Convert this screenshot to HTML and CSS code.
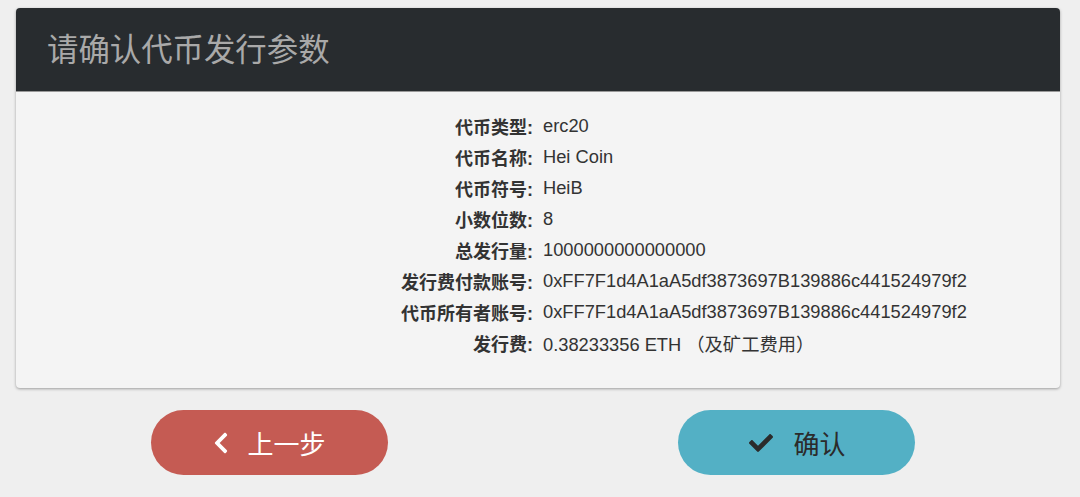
FILE: index.html
```html
<!DOCTYPE html>
<html lang="zh">
<head>
<meta charset="utf-8">
<link rel="stylesheet" href="styles.css">
</head>
<body>
<div class="card">
  <div class="card-header"><h1>请确认代币发行参数</h1></div>
  <div class="card-body">
    <div class="row"><span class="label">代币类型:</span><span class="value">erc20</span></div>
    <div class="row"><span class="label">代币名称:</span><span class="value">Hei Coin</span></div>
    <div class="row"><span class="label">代币符号:</span><span class="value">HeiB</span></div>
    <div class="row"><span class="label">小数位数:</span><span class="value">8</span></div>
    <div class="row"><span class="label">总发行量:</span><span class="value">1000000000000000</span></div>
    <div class="row"><span class="label">发行费付款账号:</span><span class="value">0xFF7F1d4A1aA5df3873697B139886c441524979f2</span></div>
    <div class="row"><span class="label">代币所有者账号:</span><span class="value">0xFF7F1d4A1aA5df3873697B139886c441524979f2</span></div>
    <div class="row"><span class="label">发行费:</span><span class="value">0.38233356 ETH （及矿工费用）</span></div>
  </div>
</div>
<div class="actions">
  <button class="btn btn-back">
    <svg class="icon" viewBox="0 0 320 512" width="16" height="24"><path fill="#fff" d="M34.52 239.03L228.87 44.69c9.37-9.37 24.57-9.37 33.94 0l22.67 22.67c9.36 9.36 9.37 24.52.04 33.9L131.49 256l154.02 154.75c9.34 9.38 9.32 24.54-.04 33.9l-22.67 22.67c-9.37 9.37-24.57 9.37-33.94 0L34.52 272.97c-9.37-9.37-9.37-24.57 0-33.94z"/></svg>
    <span>上一步</span>
  </button>
  <button class="btn btn-ok">
    <svg class="icon" viewBox="0 0 512 512" width="28" height="24"><path fill="#2b2b2b" d="M173.9 439.4L7.5 273c-10-10-10-26.2 0-36.2l36.2-36.2c10-10 26.2-10 36.2 0L192 312.7 432.1 72.6c10-10 26.2-10 36.2 0l36.2 36.2c10 10 10 26.2 0 36.2L210.1 439.4c-10 10-26.2 10-36.2 0z"/></svg>
    <span>确认</span>
  </button>
</div>
</body>
</html>
```
FILE: styles.css
```css
html, body {
  margin: 0;
  padding: 0;
  background: #efefef;
  font-family: "Liberation Sans", "Noto Sans CJK SC", sans-serif;
  color: #333;
}
body {
  padding: 8px 20px 0 16px;
  width: 1080px;
  box-sizing: border-box;
}
.card {
  width: 1044px;
  background: #f4f4f4;
  border-radius: 4px;
  box-shadow: 0 1px 3px rgba(0,0,0,0.35);
  overflow: hidden;
}
.card-header {
  background: #282c2f;
  height: 84px;
  display: flex;
  align-items: center;
  padding-left: 31px;
  border-bottom: 1px solid #999;
  box-sizing: border-box;
}
.card-header h1 {
  margin: 0;
  font-size: 31.4px;
  font-weight: normal;
  color: #a9a9a9;
  font-family: "Noto Sans CJK SC", sans-serif;
  line-height: 1;
  padding-bottom: 4px;
}
.card-body {
  padding: 18px 0 30px;
}
.row {
  display: flex;
  height: 31px;
  align-items: center;
  font-size: 18px;
}
.label {
  width: 50%;
  text-align: right;
  padding-right: 5px;
  box-sizing: border-box;
  font-weight: bold;
  color: #333;
}
.value {
  width: 50%;
  padding-left: 5px;
  box-sizing: border-box;
  color: #333;
  font-size: 18.3px;
}
.actions {
  display: flex;
  padding-top: 22px;
}
.btn {
  width: 237px;
  height: 65px;
  border: none;
  border-radius: 33px;
  display: flex;
  align-items: center;
  justify-content: center;
  font-family: "Noto Sans CJK SC", sans-serif;
  font-size: 26px;
  cursor: pointer;
}
.btn-back {
  margin-left: 135px;
  background: #c55b53;
  color: #fff;
  gap: 18px;
}
.btn-ok {
  margin-left: 290px;
  background: #53b0c5;
  color: #2b2b2b;
  gap: 18px;
}
.icon {
  display: block;
}
```
